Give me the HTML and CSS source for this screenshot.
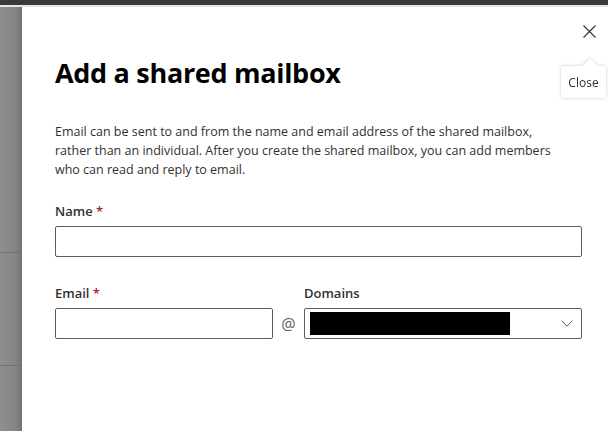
FILE: index.html
```html
<!DOCTYPE html>
<html lang="en">
<head>
<meta charset="utf-8">
<title>Add a shared mailbox</title>
<link rel="stylesheet" href="styles.css">
</head>
<body>
<div class="topbar"></div>
<div class="main">
  <div class="backdrop">
    <div class="bd-row bd-row1"></div>
    <div class="bd-row bd-row2"></div>
  </div>
  <div class="panel">
    <button class="close" aria-label="Close">
      <svg width="13" height="13" viewBox="0 0 13 13"><path d="M0.5 0.5 L12.5 12.5 M12.5 0.5 L0.5 12.5" stroke="#323130" stroke-width="1.1" fill="none"/></svg>
    </button>
    <div class="tooltip">Close</div>
    <h1 class="title">Add a shared mailbox</h1>
    <p class="desc">Email can be sent to and from the name and email address of the shared mailbox, rather than an individual. After you create the shared mailbox, you can add members who can read and reply to email.</p>
    <div class="field field-name">
      <label class="label">Name <span class="req">*</span></label>
      <div class="input"></div>
    </div>
    <div class="row">
      <div class="field field-email">
        <label class="label">Email <span class="req">*</span></label>
        <div class="input"></div>
      </div>
      <div class="at">@</div>
      <div class="field field-domain">
        <label class="label">Domains</label>
        <div class="input dropdown">
          <div class="redact"></div>
          <svg class="chev" width="12" height="7" viewBox="0 0 12 7"><path d="M0.5 0.6 L6 6.1 L11.5 0.6" stroke="#605e5c" stroke-width="1" fill="none"/></svg>
        </div>
      </div>
    </div>
  </div>
</div>
</body>
</html>
```
FILE: styles.css
```css
* { box-sizing: border-box; }
html, body { margin: 0; padding: 0; height: 100%; }
body {
  font-family: "Open Sans", "Noto Sans", sans-serif;
  color: #323130;
  background: #fff;
  overflow: hidden;
}
.topbar {
  height: 7px;
  background: #3b3a39;
  border-bottom: 2px solid #e6e6e6;
}
.main {
  display: flex;
  height: calc(100% - 7px);
}
.backdrop {
  width: 22px;
  flex: none;
  background: linear-gradient(to right, #8e8e8e, #858585 70%, #727272);
  display: flex;
  flex-direction: column;
}
.bd-row { border-bottom: 1px solid #707070; }
.bd-row1 { height: 246px; }
.bd-row2 { height: 113px; }
.panel {
  flex: 1;
  position: relative;
  background: #fff;
  padding: 0 26px 0 33px;
}
.close {
  position: absolute;
  right: 7px;
  top: 12px;
  width: 24px;
  height: 24px;
  padding: 0;
  border: 0;
  background: transparent;
  display: flex;
  align-items: center;
  justify-content: center;
}
.tooltip {
  position: absolute;
  right: 2px;
  top: 59px;
  width: 45px;
  height: 32px;
  background: #fff;
  font-size: 12px;
  color: #323130;
  display: flex;
  align-items: center;
  justify-content: center;
  border-radius: 2px;
  filter: drop-shadow(0 0.5px 1.5px rgba(0,0,0,0.22));
}
.tooltip::before {
  content: "";
  position: absolute;
  top: -8px;
  left: 21px;
  border-left: 8px solid transparent;
  border-right: 8px solid transparent;
  border-bottom: 8px solid #fff;
}
.title {
  margin: 48px 0 0;
  font-size: 27px;
  font-weight: 700;
  line-height: 36px;
  color: #000;
  letter-spacing: -0.3px;
}
.desc {
  margin: 31px 0 0;
  max-width: 510px;
  font-size: 12.5px;
  line-height: 19px;
  color: #323130;
}
.field { display: flex; flex-direction: column; }
.field-name { margin-top: 22px; }
.label {
  font-size: 13px;
  font-weight: 600;
  line-height: 20px;
  padding-bottom: 5px;
  color: #323130;
}
.req { color: #a4262c; }
.input {
  height: 31px;
  border: 1px solid #605e5c;
  border-radius: 2px;
  background: #fff;
}
.row {
  display: flex;
  align-items: flex-end;
  margin-top: 26px;
}
.field-email { width: 218px; }
.at {
  width: 31px;
  height: 31px;
  display: flex;
  align-items: center;
  justify-content: center;
  font-size: 16px;
  color: #605e5c;
}
.field-domain { flex: 1; }
.dropdown {
  display: flex;
  align-items: center;
  padding: 0 8px 0 5px;
}
.redact {
  width: 200px;
  height: 23px;
  background: #000;
}
.chev { margin-left: auto; }
```
